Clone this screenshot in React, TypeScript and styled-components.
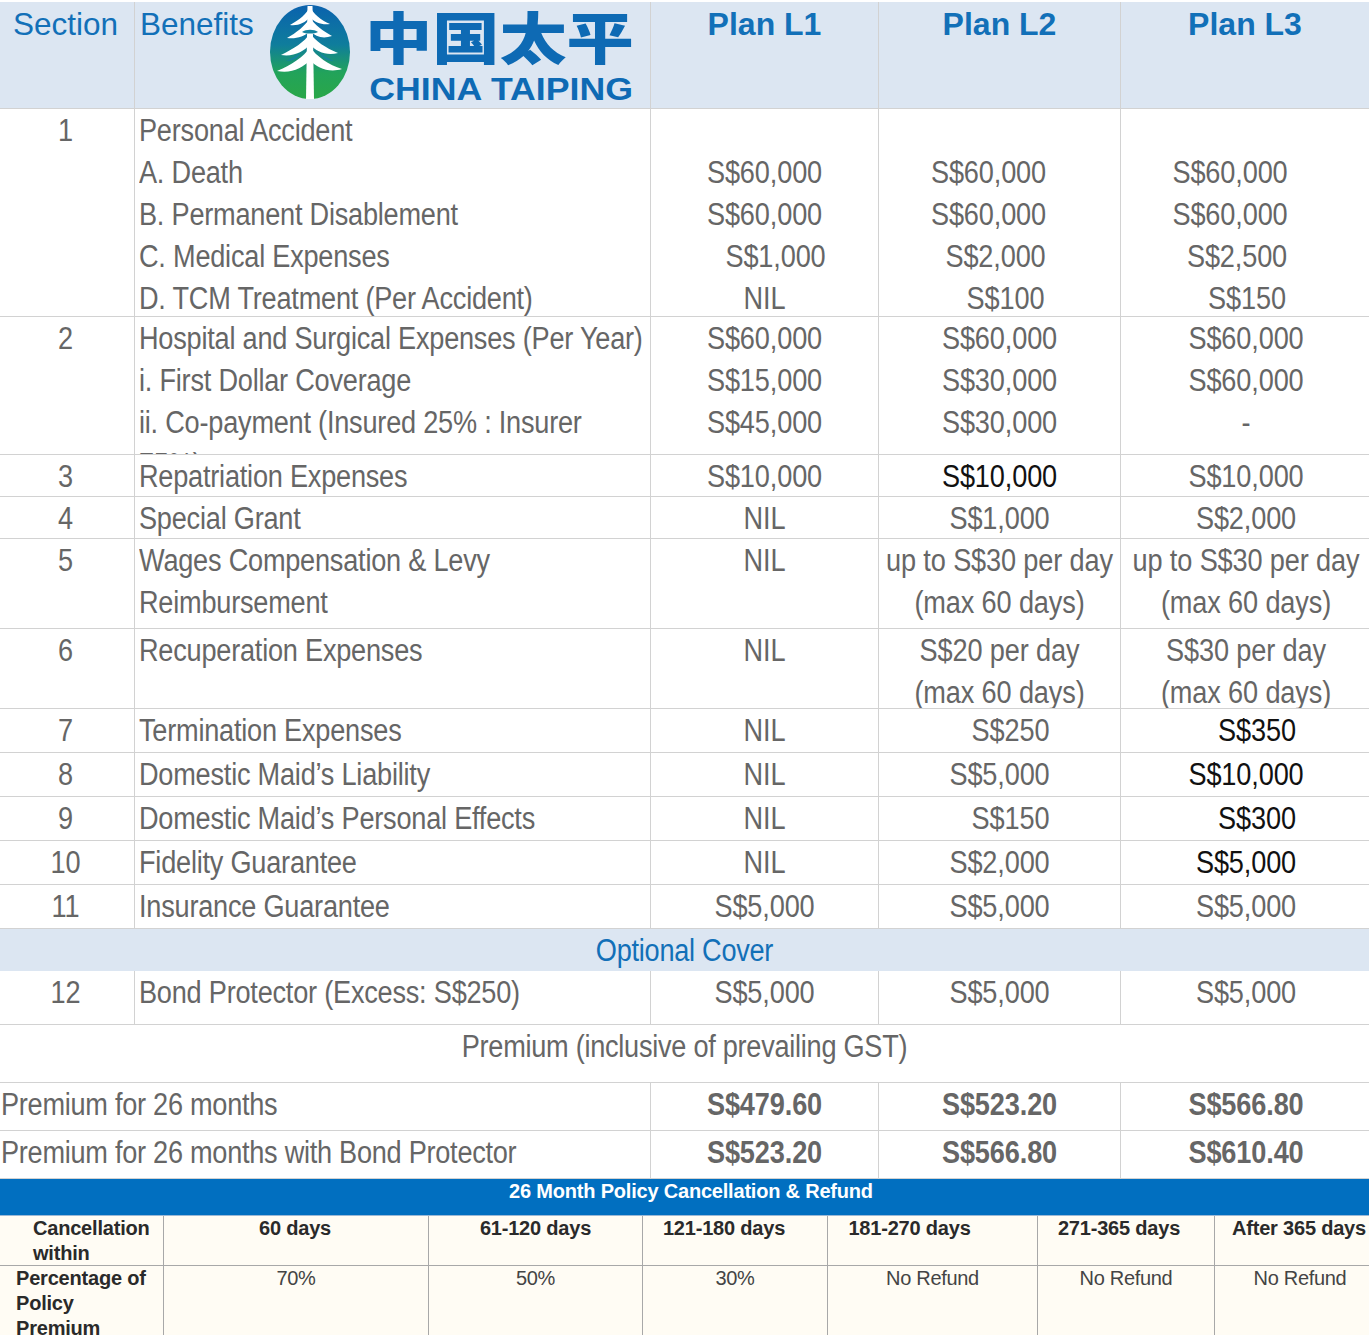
import styled, { createGlobalStyle } from 'styled-components';

const GlobalStyle = createGlobalStyle`
  html, body {
    margin: 0;
    background: #fff;
  }
  body {
    font-family: 'Liberation Sans', Arial, sans-serif;
    color: #666;
  }
`;

const COLS = '135px 516px 228px 242px 248px';
const LINE = '#d2d2d2';
// the table text in the picture is a horizontally squeezed Arial
const SQUEEZE = 0.875;

const Page = styled.div`
  width: 1369px;
  height: 1335px;
  padding-top: 2px;
  box-sizing: border-box;
  overflow: hidden;
`;
const Row = styled.div<{ $h: number }>`
  display: grid;
  grid-template-columns: ${COLS};
  height: ${(p) => p.$h}px;
  box-sizing: border-box;
  border-bottom: 1px solid ${LINE};
  overflow: hidden;
`;
const HeadRow = styled(Row)`
  background: #dce6f2;
`;
const Cell = styled.div`
  border-right: 1px solid ${LINE};
  font-size: 31px;
  line-height: 42px;
  overflow: hidden;
  &:last-child {
    border-right: 0;
  }
`;
const Squeeze = styled.div`
  width: ${100 / SQUEEZE}%;
  padding-top: 1px;
  transform: scaleX(${SQUEEZE});
  transform-origin: left top;
`;
const SectionNo = styled(Cell)`
  text-align: center;
  padding-right: 3px;
`;
const Benefit = styled(Cell)`
  padding: 0 0 0 4px;
  letter-spacing: -0.25px;
`;
const Value = styled(Cell)`
  text-align: center;
  letter-spacing: -0.15px;
  &:last-child {
    padding-left: 2px;
  }
`;
const Line = styled.div<{ $shift?: number; $dark?: boolean; $bold?: boolean }>`
  min-height: 42px;
  padding-left: ${(p) => Math.max(0, ((p.$shift || 0) * 2) / SQUEEZE)}px;
  padding-right: ${(p) => Math.max(0, (-(p.$shift || 0) * 2) / SQUEEZE)}px;
  color: ${(p) => (p.$dark ? '#111' : 'inherit')};
  font-weight: ${(p) => (p.$bold ? 700 : 400)};
`;
const HeadSection = styled(Cell)`
  color: #1270b8;
  font-size: 31.5px;
  padding: 1px 0 0 13px;
`;
const HeadBenefit = styled(Cell)`
  color: #1270b8;
  font-size: 31.5px;
  display: flex;
  align-items: flex-start;
  padding: 1px 0 0 5px;
`;
const Logo = styled.div`
  display: flex;
  margin-left: 15px;
`;
const LogoWords = styled.div`
  display: flex;
  flex-direction: column;
  margin-left: 16px;
  color: #0e6ab4;
`;
const LogoCn = styled.div`
  font-family: 'Noto Sans CJK SC', sans-serif;
  font-weight: 900;
  font-size: 56px;
  line-height: 64px;
  margin: 0 0 9px -2px;
  white-space: nowrap;
  transform: scaleX(1.2);
  transform-origin: left top;
`;
const LogoEn = styled.div`
  font-weight: 700;
  font-size: 31px;
  line-height: 28px;
  padding-left: 2px;
  white-space: nowrap;
  transform: scaleX(1.151);
  transform-origin: left top;
`;
const HeadPlan = styled(Cell)`
  color: #1270b8;
  font-size: 32px;
  font-weight: 700;
  text-align: center;
  padding-top: 1px;
`;
const OptionalRow = styled.div`
  height: 42px;
  background: #dce6f2;
  color: #1270b8;
  font-size: 31px;
  letter-spacing: -0.3px;
  line-height: 42px;
  text-align: center;
`;
const BandRow = styled.div`
  height: 58px;
  box-sizing: border-box;
  border-bottom: 1px solid ${LINE};
  font-size: 31px;
  letter-spacing: -0.3px;
  line-height: 42px;
  text-align: center;
`;
const PremiumRow = styled.div`
  display: grid;
  grid-template-columns: 651px 228px 242px 248px;
  height: 48px;
  box-sizing: border-box;
  border-bottom: 1px solid ${LINE};
  &:last-of-type {
    border-bottom: 0;
  }
`;
const PremiumLabel = styled(Cell)`
  padding-left: 1px;
  letter-spacing: -0.3px;
`;
const BlueBar = styled.div`
  height: 36px;
  padding-left: 13px;
  background: #016fc0;
  color: #fff;
  font-weight: 700;
  font-size: 20px;
  letter-spacing: -0.2px;
  line-height: 25px;
  text-align: center;
  box-sizing: border-box;
`;
const RefundTable = styled.div`
  display: grid;
  grid-template-columns: 164px 265px 214px 185px 210px 177px 154px;
  grid-template-rows: 50px 70px;
  background: #fffcf4;
  border-top: 1px solid #9cb9d6;
`;
const RefundCell = styled.div<{ $head?: boolean; $left?: number; $shift?: number }>`
  box-sizing: border-box;
  border-right: 1px solid #a8a8a8;
  border-bottom: 1px solid #a8a8a8;
  padding-left: ${(p) => p.$left || Math.max(0, (p.$shift || 0) * 2)}px;
  padding-right: ${(p) => (p.$left ? 6 : Math.max(0, -(p.$shift || 0) * 2))}px;
  color: ${(p) => (p.$head ? '#2a2a2a' : '#444')};
  font-weight: ${(p) => (p.$head ? 700 : 400)};
  font-size: 20px;
  letter-spacing: ${(p) => (p.$head ? '-0.2px' : '-0.3px')};
  line-height: 25px;
  text-align: ${(p) => (p.$left ? 'left' : 'center')};
  white-space: ${(p) => (p.$left ? 'normal' : 'nowrap')};
  &:nth-child(7n) {
    border-right: 0;
  }
`;

const TaipingMark = () => (
  <svg width="82" height="98" viewBox="0 0 82 98">
    <defs>
      <linearGradient id="oval" x1="0" y1="0" x2="0" y2="1">
        <stop offset="0" stopColor="#0a62ae" />
        <stop offset="0.42" stopColor="#0f7d9c" />
        <stop offset="0.72" stopColor="#22a35a" />
        <stop offset="1" stopColor="#2aa748" />
      </linearGradient>
    </defs>
    <ellipse cx="41" cy="49" rx="40" ry="47" fill="url(#oval)" />
    <g fill="#fff">
      <path d="M37 96 L38.5 3 H43.5 L45 96 Z" />
      <path d="M41 3 C44 11 52 17 61 21 C53 22 46 20 41 14 C36 20 29 23 21 22 C30 17 38 11 41 3 Z" />
      <path d="M41 15 C46 22 54 28 63 33 C54 36 47 34 41 28 C35 34 27 36 18 35 C27 30 36 23 41 15 Z" />
      <path d="M41 30 C46 38 57 45 69 50 C58 53 47 49 41 41 C35 49 24 54 12 52 C24 46 36 39 41 30 Z" />
      <path d="M41 44 C47 53 60 62 73 66 C60 70 48 65 41 57 C34 65 22 71 8 68 C22 62 35 54 41 44 Z" />
    </g>
    <g fill="#1483a0">
      <path d="M33 29 C37 26 45 26 49 29 C45 31 37 31 33 29 Z" />
      <path d="M17 58 C22 56 27 53 31 50 C30 54 25 58 17 58 Z" />
      <path d="M65 58 C60 56 55 53 51 50 C52 54 57 58 65 58 Z" />
    </g>
  </svg>
);

type V = { t?: string; s?: number; d?: boolean };
type Item = { n: string; h: number; b: string[]; a: V[]; c: V[]; e: V[] };

const one = (n: string, h: number, b: string, a: V, c: V, e: V): Item => ({
  n,
  h,
  b: [b],
  a: [a],
  c: [c],
  e: [e],
});
const items: Item[] = [
  {
    n: '1',
    h: 208,
    b: ['Personal Accident', 'A. Death', 'B. Permanent Disablement', 'C. Medical Expenses', 'D. TCM Treatment (Per Accident)'],
    a: [{}, { t: 'S$60,000' }, { t: 'S$60,000' }, { t: 'S$1,000', s: 11 }, { t: 'NIL' }],
    c: [{}, { t: 'S$60,000', s: -11 }, { t: 'S$60,000', s: -11 }, { t: 'S$2,000', s: -4 }, { t: 'S$100', s: 6 }],
    e: [{}, { t: 'S$60,000', s: -16 }, { t: 'S$60,000', s: -16 }, { t: 'S$2,500', s: -9 }, { t: 'S$150', s: 1 }],
  },
  {
    n: '2',
    h: 138,
    b: ['Hospital and Surgical Expenses (Per Year)', 'i. First Dollar Coverage', 'ii. Co-payment (Insured 25% : Insurer', '75%)'],
    a: [{ t: 'S$60,000' }, { t: 'S$15,000' }, { t: 'S$45,000' }],
    c: [{ t: 'S$60,000' }, { t: 'S$30,000' }, { t: 'S$30,000' }],
    e: [{ t: 'S$60,000' }, { t: 'S$60,000' }, { t: '-' }],
  },
  one('3', 42, 'Repatriation Expenses', { t: 'S$10,000' }, { t: 'S$10,000', d: true }, { t: 'S$10,000' }),
  one('4', 42, 'Special Grant', { t: 'NIL' }, { t: 'S$1,000' }, { t: 'S$2,000' }),
  {
    n: '5',
    h: 90,
    b: ['Wages Compensation & Levy Reimbursement'],
    a: [{ t: 'NIL' }],
    c: [{ t: 'up to S$30 per day' }, { t: '(max 60 days)' }],
    e: [{ t: 'up to S$30 per day' }, { t: '(max 60 days)' }],
  },
  {
    n: '6',
    h: 80,
    b: ['Recuperation Expenses'],
    a: [{ t: 'NIL' }],
    c: [{ t: 'S$20 per day' }, { t: '(max 60 days)' }],
    e: [{ t: 'S$30 per day' }, { t: '(max 60 days)' }],
  },
  one('7', 44, 'Termination Expenses', { t: 'NIL' }, { t: 'S$250', s: 11 }, { t: 'S$350', s: 11, d: true }),
  one('8', 44, 'Domestic Maid’s Liability', { t: 'NIL' }, { t: 'S$5,000' }, { t: 'S$10,000', d: true }),
  one('9', 44, 'Domestic Maid’s Personal Effects', { t: 'NIL' }, { t: 'S$150', s: 11 }, { t: 'S$300', s: 11, d: true }),
  one('10', 44, 'Fidelity Guarantee', { t: 'NIL' }, { t: 'S$2,000' }, { t: 'S$5,000', d: true }),
  one('11', 44, 'Insurance Guarantee', { t: 'S$5,000' }, { t: 'S$5,000' }, { t: 'S$5,000' }),
];

const premiums = [
  ['Premium for 26 months', 'S$479.60', 'S$523.20', 'S$566.80'],
  ['Premium for 26 months with Bond Protector', 'S$523.20', 'S$566.80', 'S$610.40'],
];
const refundHead = [
  { t: '60 days', s: -1 },
  { t: '61-120 days', s: 0 },
  { t: '121-180 days', s: -11 },
  { t: '181-270 days', s: -23 },
  { t: '271-365 days', s: -7 },
  { t: 'After 365 days', s: 7 },
];
const refundBody = [
  { t: '70%', s: 0 },
  { t: '50%', s: 0 },
  { t: '30%', s: 0 },
  { t: 'No Refund', s: 0 },
  { t: 'No Refund', s: 0 },
  { t: 'No Refund', s: 8 },
];

const Lines = ({ list }: { list: V[] }) => (
  <Squeeze>
    {list.map((v, i) => (
      <Line key={i} $shift={v.s} $dark={v.d}>
        {v.t}
      </Line>
    ))}
  </Squeeze>
);

const BenefitRow = ({ item }: { item: Item }) => (
  <Row $h={item.h}>
    <SectionNo>
      <Squeeze>{item.n}</Squeeze>
    </SectionNo>
    <Benefit>
      <Squeeze>
        {item.b.map((b) => (
          <div key={b}>{b}</div>
        ))}
      </Squeeze>
    </Benefit>
    <Value>
      <Lines list={item.a} />
    </Value>
    <Value>
      <Lines list={item.c} />
    </Value>
    <Value>
      <Lines list={item.e} />
    </Value>
  </Row>
);

export default function App() {
  return (
    <Page>
      <GlobalStyle />
      <HeadRow $h={107}>
        <HeadSection>Section</HeadSection>
        <HeadBenefit>
          Benefits
          <Logo>
            <TaipingMark />
            <LogoWords>
              <LogoCn>中国太平</LogoCn>
              <LogoEn>CHINA TAIPING</LogoEn>
            </LogoWords>
          </Logo>
        </HeadBenefit>
        <HeadPlan>Plan L1</HeadPlan>
        <HeadPlan>Plan L2</HeadPlan>
        <HeadPlan>Plan L3</HeadPlan>
      </HeadRow>
      {items.map((item) => (
        <BenefitRow key={item.n} item={item} />
      ))}
      <OptionalRow>
        <Squeeze>Optional Cover</Squeeze>
      </OptionalRow>
      <BenefitRow
        item={one('12', 54, 'Bond Protector (Excess: S$250)', { t: 'S$5,000' }, { t: 'S$5,000' }, { t: 'S$5,000' })}
      />
      <BandRow>
        <Squeeze>Premium (inclusive of prevailing GST)</Squeeze>
      </BandRow>
      {premiums.map((p) => (
        <PremiumRow key={p[0]}>
          <PremiumLabel>
            <Squeeze>{p[0]}</Squeeze>
          </PremiumLabel>
          {p.slice(1).map((v, i) => (
            <Value key={i}>
              <Squeeze>
                <Line $bold>{v}</Line>
              </Squeeze>
            </Value>
          ))}
        </PremiumRow>
      ))}
      <BlueBar>26 Month Policy Cancellation &amp; Refund</BlueBar>
      <RefundTable>
        <RefundCell $head $left={33}>
          Cancellation within
        </RefundCell>
        {refundHead.map((h) => (
          <RefundCell key={h.t} $head $shift={h.s}>
            {h.t}
          </RefundCell>
        ))}
        <RefundCell $head $left={16}>
          Percentage of Policy Premium
        </RefundCell>
        {refundBody.map((v, i) => (
          <RefundCell key={i} $shift={v.s}>
            {v.t}
          </RefundCell>
        ))}
      </RefundTable>
    </Page>
  );
}
